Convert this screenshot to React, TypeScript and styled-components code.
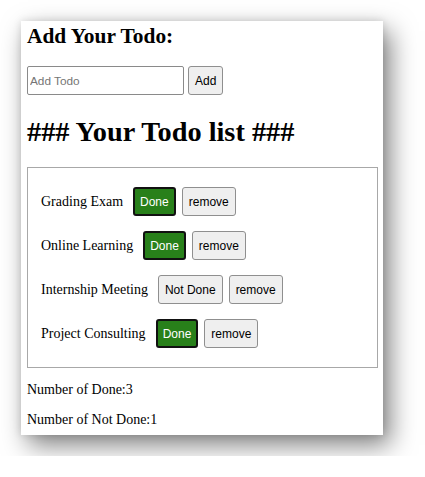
import React from "react";
import styled, { createGlobalStyle } from "styled-components";

const GlobalStyle = createGlobalStyle`
  html, body { margin: 0; padding: 0; background: #ffffff; }
  body { font-family: "Liberation Serif", "Times New Roman", serif; color: #000; }
`;

const Page = styled.div`
  padding: 21px;
`;

const Card = styled.div`
  width: 362px;
  box-sizing: border-box;
  background: #ffffff;
  padding: 2.5px 5px 7px 6px;
  box-shadow: 7px 10px 24px rgba(0, 0, 0, 0.5), 0 0 8px rgba(0, 0, 0, 0.12);
`;

const SubTitle = styled.h3`
  margin: 0;
  font-size: 21.4px;
  font-weight: bold;
  line-height: normal;
`;

const AddRow = styled.div`
  display: flex;
  align-items: center;
  gap: 4px;
  margin-top: 17.5px;
`;

const Input = styled.input`
  width: 157px;
  height: 29px;
  box-sizing: border-box;
  border: 1px solid #8a8a8a;
  border-radius: 2px;
  padding: 0 2px;
  font-family: Arial, "Liberation Sans", sans-serif;
  font-size: 11.8px;
  color: #000;
  &::placeholder { color: #757575; }
`;

const Button = styled.button<{ $done?: boolean }>`
  font-family: Arial, "Liberation Sans", sans-serif;
  font-size: 12px;
  line-height: 14px;
  border-radius: 3px;
  cursor: pointer;
  ${(p) =>
    p.$done
      ? `
    background: #28801a;
    color: #ffffff;
    border: 2px solid #111;
    padding: 5.5px 5px;
  `
      : `
    background: #efefef;
    color: #000;
    border: 1px solid #8f8f8f;
    padding: 6.5px 6px;
  `}
`;

const Title = styled.h1`
  margin: 20.5px 0 0 0;
  font-size: 28.3px;
  font-weight: bold;
  line-height: normal;
`;

const ListBox = styled.div`
  margin-top: 19.5px;
  border: 1px solid #a8a8a8;
  padding: 19px 13px;
  display: flex;
  flex-direction: column;
  gap: 15px;
`;

const Row = styled.div`
  display: flex;
  align-items: center;
`;

const Label = styled.span`
  font-size: 14px;
  margin-right: 10px;
`;

const Actions = styled.div`
  display: flex;
  gap: 6px;
`;

const Stat = styled.p`
  margin: 14px 0 0 0;
  font-size: 14px;
`;

const todos = [
  { name: "Grading Exam", done: true },
  { name: "Online Learning", done: true },
  { name: "Internship Meeting", done: false },
  { name: "Project Consulting", done: true },
];

export default function App() {
  const doneCount = todos.filter((t) => t.done).length;
  return (
    <>
      <GlobalStyle />
      <Page>
        <Card>
          <SubTitle>Add Your Todo:</SubTitle>
          <AddRow>
            <Input placeholder="Add Todo" />
            <Button>Add</Button>
          </AddRow>
          <Title>### Your Todo list ###</Title>
          <ListBox>
            {todos.map((t) => (
              <Row key={t.name}>
                <Label>{t.name}</Label>
                <Actions>
                  <Button $done={t.done}>{t.done ? "Done" : "Not Done"}</Button>
                  <Button>remove</Button>
                </Actions>
              </Row>
            ))}
          </ListBox>
          <Stat>Number of Done:{doneCount}</Stat>
          <Stat>Number of Not Done:{todos.length - doneCount}</Stat>
        </Card>
      </Page>
    </>
  );
}
